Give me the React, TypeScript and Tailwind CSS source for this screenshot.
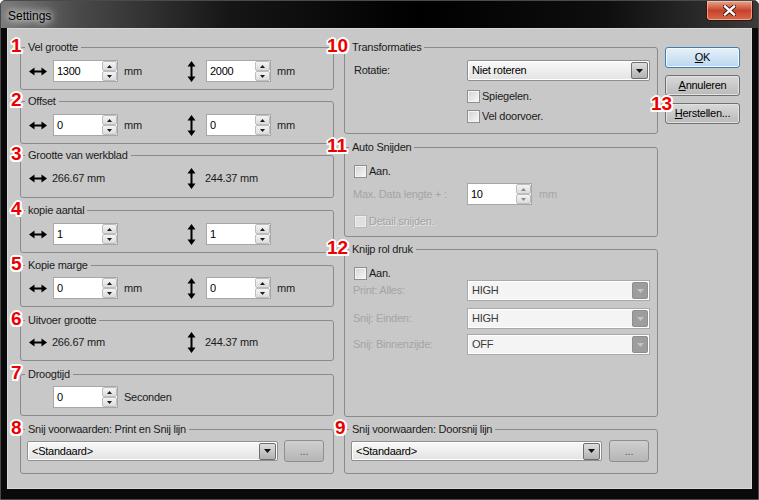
import React from "react";

const font = "font-['Liberation_Sans',Arial,sans-serif] tracking-[-0.25px]";

function HArrow() {
  return (
    <svg width="18" height="9" viewBox="0 0 18 9" className="block">
      <path d="M0 4.5 L5.5 0.5 L5.5 8.5 Z M18 4.5 L12.5 0.5 L12.5 8.5 Z" fill="#000" />
      <rect x="5" y="3.5" width="8" height="2" fill="#000" />
    </svg>
  );
}

function VArrow() {
  return (
    <svg width="9" height="21" viewBox="0 0 9 21" className="block">
      <path d="M4.5 0 L0.5 5.5 L8.5 5.5 Z M4.5 21 L0.5 15.5 L8.5 15.5 Z" fill="#000" />
      <rect x="3.5" y="5" width="2" height="11" fill="#000" />
    </svg>
  );
}

function SpinBtn({ up, disabled }: { up?: boolean; disabled?: boolean }) {
  const c = disabled ? "#8a8a8a" : "#1a1a1a";
  return (
    <div className="flex-1 flex items-center justify-center rounded-[2px] border border-[#bdbdbd] bg-gradient-to-b from-[#f4f4f4] to-[#dcdcdc]">
      <svg width="5" height="3" viewBox="0 0 5 3" className="block">
        {up ? <path d="M2.5 0 L5 3 L0 3 Z" fill={c} /> : <path d="M0 0 L5 0 L2.5 3 Z" fill={c} />}
      </svg>
    </div>
  );
}

function Spin({ value, disabled }: { value: string; disabled?: boolean }) {
  return (
    <div className="flex h-[22px] w-[65px] border border-[#a7a7a7] bg-white">
      <div className="w-[48px] pl-[3px] flex items-center text-[11px] text-black">{value}</div>
      <div className="w-[15px] flex flex-col">
        <SpinBtn up disabled={disabled} />
        <SpinBtn disabled={disabled} />
      </div>
    </div>
  );
}

function DropBtn({ disabled }: { disabled?: boolean }) {
  return disabled ? (
    <div className="w-[16px] h-[17px] flex items-center justify-center rounded-[2px] border border-[#8e8e8e] bg-[#9d9d9d]">
      <svg width="7" height="4" viewBox="0 0 7 4" className="block">
        <path d="M0 0 L7 0 L3.5 4 Z" fill="#c4c4c4" />
      </svg>
    </div>
  ) : (
    <div className="w-[17px] h-[17px] flex items-center justify-center rounded-[2px] border border-[#6e6e6e] bg-gradient-to-b from-[#dedede] to-[#b1b1b1]">
      <svg width="7" height="4" viewBox="0 0 7 4" className="block">
        <path d="M0 0 L7 0 L3.5 4 Z" fill="#111" />
      </svg>
    </div>
  );
}

function Combo({ text, className }: { text: string; className: string }) {
  return (
    <div
      className={
        "h-[20px] flex items-center border border-[#8f8f8f] rounded-[2px] bg-gradient-to-b from-[#f9f9f9] to-[#e3e3e3] shadow-[inset_0_0_0_1px_#ffffff] pl-[4px] pr-[1px] " +
        className
      }
    >
      <span className="flex-1 text-[11px] text-black leading-none">{text}</span>
      <DropBtn />
    </div>
  );
}

function DisCombo({ text }: { text: string }) {
  return (
    <div className="w-[183px] h-[21px] flex items-center border border-[#a9a9a9] bg-[#f4f4f4] shadow-[inset_0_0_0_1px_#ffffff] pl-[4px] pr-[1px]">
      <span className="flex-1 text-[11px] text-[#3a3a3a] leading-none">{text}</span>
      <DropBtn disabled />
    </div>
  );
}

function Check({ label, disabled }: { label: string; disabled?: boolean }) {
  return (
    <div className="flex items-center h-[20px]">
      <div
        className={
          "w-[13px] h-[13px] border flex items-center justify-center " +
          (disabled ? "border-[#b9b9b9] bg-[#ededed]" : "border-[#8e8f8f] bg-[#f4f4f4]")
        }
      >
        <div
          className={
            "w-[9px] h-[9px] " +
            (disabled ? "bg-[#e0e0e0]" : "bg-gradient-to-br from-[#d6d6d6] to-[#f6f6f6]")
          }
        />
      </div>
      <span
        className={
          "ml-[2px] text-[11px] " +
          (disabled ? "text-[#a3a3a3] [text-shadow:1px_1px_0_#e6e6e6]" : "text-[#1b1b1b]")
        }
      >
        {label}
      </span>
    </div>
  );
}

function Num({ n, className }: { n: string; className: string }) {
  return (
    <span
      className={
        "absolute tracking-normal text-[19px] leading-[19px] font-bold text-[#ec0000] [text-shadow:-2px_0_#fff,2px_0_#fff,0_-2px_#fff,0_2px_#fff,-1.5px_-1.5px_#fff,1.5px_1.5px_#fff,-1.5px_1.5px_#fff,1.5px_-1.5px_#fff] " +
        className
      }
    >
      {n}
    </span>
  );
}

function Group({
  title,
  num,
  numClass,
  className,
  children,
}: {
  title: string;
  num: string;
  numClass: string;
  className: string;
  children: React.ReactNode;
}) {
  return (
    <div className={"relative " + className}>
      <fieldset className="h-full border border-[#8a8a8a] rounded-[3px]">
        <legend className="ml-[4px] px-[3px] text-[11px] leading-[14px] text-[#1b1b1b]">{title}</legend>
        {children}
      </fieldset>
      <Num n={num} className={numClass} />
    </div>
  );
}

function PairRow({ a, b, spin }: { a: string; b: string; spin: boolean }) {
  return (
    <div className="flex items-center h-[22px] pl-[2px] text-[11px] text-[#1b1b1b]">
      <div className="w-[153px] flex items-center">
        <div className="w-[30px] flex justify-center">
          <HArrow />
        </div>
        {spin ? (
          <>
            <Spin value={a} />
            <span className="ml-[6px]">mm</span>
          </>
        ) : (
          <span className="-ml-[1px]">{a} mm</span>
        )}
      </div>
      <div className="flex items-center">
        <div className="w-[30px] flex justify-center">
          <VArrow />
        </div>
        {spin ? (
          <>
            <Spin value={b} />
            <span className="ml-[6px]">mm</span>
          </>
        ) : (
          <span className="-ml-[1px]">{b} mm</span>
        )}
      </div>
    </div>
  );
}

function WinBtn({ children, primary }: { children: React.ReactNode; primary?: boolean }) {
  return (
    <div
      className={
        "h-[21px] w-[75px] flex items-center justify-center rounded-[3px] border text-[11px] text-black " +
        (primary
          ? "border-[#3c7fb1] bg-gradient-to-b from-[#e6f1fb] to-[#bcd6ee] shadow-[inset_0_0_0_1px_#f4f9fd]"
          : "border-[#707070] bg-gradient-to-b from-[#d9d9d9] to-[#bababa] shadow-[inset_0_0_0_1px_#e2e2e2]")
      }
    >
      {children}
    </div>
  );
}

export default function App() {
  return (
    <div
      className={
        font +
        " w-[759px] h-[500px] overflow-hidden flex flex-col bg-[#0a0a0a] border border-[#4a4a4a] rounded-t-[5px]"
      }
    >
      {/* Title bar */}
      <div className="h-[27px] flex items-start justify-between bg-[linear-gradient(90deg,#7a7a7a_0%,#4a4a4a_10%,#161616_30%,#000_55%,#0e0e0e_80%,#3b3b3b_100%)]">
        <div className="pl-[7px] pt-[6px] text-[12px] tracking-normal text-black [text-shadow:0_0_6px_#fff,0_0_10px_#ddd,0_0_14px_#bbb]">
          Settings
        </div>
        <div className="mr-[5px] w-[47px] h-[20px] rounded-b-[4px] border border-t-0 border-[#3b1208] bg-gradient-to-b from-[#e4a48e] via-[#c9412a] to-[#d66a4c] shadow-[inset_0_0_0_1px_rgba(255,220,200,0.55)] flex items-center justify-center">
          <svg width="13" height="11" viewBox="0 0 13 11" className="block">
            <path
              d="M2 1.5 L11 9.5 M11 1.5 L2 9.5"
              stroke="#3a1408"
              strokeWidth="4.2"
              strokeLinecap="square"
              fill="none"
            />
            <path
              d="M2 1.5 L11 9.5 M11 1.5 L2 9.5"
              stroke="#ffffff"
              strokeWidth="2.4"
              strokeLinecap="square"
              fill="none"
            />
          </svg>
        </div>
      </div>

      {/* Client area */}
      <div className="mx-[6px] h-[461px] border border-[#d8d8d8] bg-[#c8c8c8] flex pl-[12px] pt-[11px]">
        {/* Left column */}
        <div className="w-[314px] flex flex-col">
          <Group title="Vel grootte" num="1" numClass="top-[-4px] left-[-9px]" className="h-[50px]">
            <div className="pt-[6px]">
              <PairRow a="1300" b="2000" spin />
            </div>
          </Group>
          <Group title="Offset" num="2" numClass="top-[-4px] left-[-9px]" className="h-[50px] mt-[4px]">
            <div className="pt-[6px]">
              <PairRow a="0" b="0" spin />
            </div>
          </Group>
          <Group title="Grootte van werkblad" num="3" numClass="top-[-4px] left-[-9px]" className="h-[50px] mt-[4px]">
            <div className="pt-[5px]">
              <PairRow a="266.67" b="244.37" spin={false} />
            </div>
          </Group>
          <Group title="kopie aantal" num="4" numClass="top-[-4px] left-[-9px]" className="h-[50px] mt-[5px]">
            <div className="pt-[6px]">
              <div className="flex items-center h-[22px] pl-[2px] text-[11px]">
                <div className="w-[153px] flex items-center">
                  <div className="w-[30px] flex justify-center">
                    <HArrow />
                  </div>
                  <Spin value="1" />
                </div>
                <div className="w-[30px] flex justify-center">
                  <VArrow />
                </div>
                <Spin value="1" />
              </div>
            </div>
          </Group>
          <Group title="Kopie marge" num="5" numClass="top-[-4px] left-[-9px]" className="h-[49px] mt-[5px]">
            <div className="pt-[5px]">
              <PairRow a="0" b="0" spin />
            </div>
          </Group>
          <Group title="Uitvoer grootte" num="6" numClass="top-[-4px] left-[-9px]" className="h-[48px] mt-[6px]">
            <div className="pt-[4px]">
              <PairRow a="266.67" b="244.37" spin={false} />
            </div>
          </Group>
          <Group title="Droogtijd" num="7" numClass="top-[-4px] left-[-9px]" className="h-[49px] mt-[6px]">
            <div className="pt-[5px] flex items-center pl-[32px] text-[11px] text-[#1b1b1b]">
              <Spin value="0" />
              <span className="ml-[6px]">Seconden</span>
            </div>
          </Group>
          <Group
            title="Snij voorwaarden: Print en Snij lijn"
            num="8"
            numClass="top-[-4px] left-[-9px]"
            className="h-[52px] mt-[6px]"
          >
            <div className="pt-[5px] pl-[6px] flex items-start">
              <Combo text="<Standaard>" className="w-[251px]" />
              <div className="ml-[6px] w-[40px] h-[22px] -mt-[1px] rounded-[3px] border border-[#8e8e8e] bg-gradient-to-b from-[#cfcfcf] to-[#b6b6b6] flex items-center justify-center text-[11px] text-[#5a5a5a]">
                ...
              </div>
            </div>
          </Group>
        </div>

        {/* Right column */}
        <div className="ml-[10px] w-[314px] flex flex-col">
          <Group title="Transformaties" num="10" numClass="top-[-4px] left-[-17px]" className="h-[94px]">
            <div className="pt-[6px] pl-[9px] text-[11px] text-[#1b1b1b]">
              <div className="flex items-center h-[21px]">
                <span className="w-[113px]">Rotatie:</span>
                <Combo text="Niet roteren" className="w-[183px] h-[21px]" />
              </div>
              <div className="pl-[113px] mt-[5px]">
                <Check label="Spiegelen." />
                <Check label="Vel doorvoer." />
              </div>
            </div>
          </Group>
          <Group title="Auto Snijden" num="11" numClass="top-[-4px] left-[-17px]" className="h-[97px] mt-[6px]">
            <div className="pt-[7px] pl-[9px] text-[11px]">
              <Check label="Aan." />
              <div className="flex items-center h-[22px] mt-[2px]">
                <span className="w-[113px] -ml-[1px] text-[#a5a5a5]">Max. Data lengte + :</span>
                <div className="ml-[1px]">
                  <Spin value="10" disabled />
                </div>
                <span className="ml-[7px] text-[#a5a5a5]">mm</span>
              </div>
              <div className="mt-[6px]">
                <Check label="Detail snijden." disabled />
              </div>
            </div>
          </Group>
          <Group title="Knijp rol druk" num="12" numClass="top-[-4px] left-[-17px]" className="h-[175px] mt-[5px]">
            <div className="pt-[9px] pl-[9px] text-[11px]">
              <div className="h-[16px] flex items-center">
                <Check label="Aan." />
              </div>
              <div className="flex items-center mt-[-1px]">
                <span className="w-[113px] -ml-[1px] text-[#a5a5a5]">Print: Alles:</span>
                <div className="ml-[1px]">
                  <DisCombo text="HIGH" />
                </div>
              </div>
              <div className="flex items-center mt-[7px]">
                <span className="w-[113px] -ml-[1px] text-[#a5a5a5]">Snij: Einden:</span>
                <div className="ml-[1px]">
                  <DisCombo text="HIGH" />
                </div>
              </div>
              <div className="flex items-center mt-[5px]">
                <span className="w-[113px] -ml-[1px] text-[#a5a5a5]">Snij: Binnenzijde:</span>
                <div className="ml-[1px]">
                  <DisCombo text="OFF" />
                </div>
              </div>
            </div>
          </Group>
          <Group
            title="Snij voorwaarden: Doorsnij lijn"
            num="9"
            numClass="top-[-4px] left-[-9px]"
            className="h-[52px] mt-[5px]"
          >
            <div className="pt-[5px] pl-[6px] flex items-start">
              <Combo text="<Standaard>" className="w-[251px]" />
              <div className="ml-[7px] w-[40px] h-[22px] -mt-[1px] rounded-[3px] border border-[#8e8e8e] bg-gradient-to-b from-[#cfcfcf] to-[#b6b6b6] flex items-center justify-center text-[11px] text-[#5a5a5a]">
                ...
              </div>
            </div>
          </Group>
        </div>

        {/* Buttons */}
        <div className="ml-[7px] w-[75px] pt-[7px] flex flex-col gap-[7px]">
          <WinBtn primary>
            <span className="underline">O</span>K
          </WinBtn>
          <WinBtn>
            <span className="underline">A</span>nnuleren
          </WinBtn>
          <div className="relative">
            <WinBtn>
              <span className="underline">H</span>erstellen...
            </WinBtn>
            <Num n="13" className="top-[-9px] left-[-14px]" />
          </div>
        </div>
      </div>
    </div>
  );
}
